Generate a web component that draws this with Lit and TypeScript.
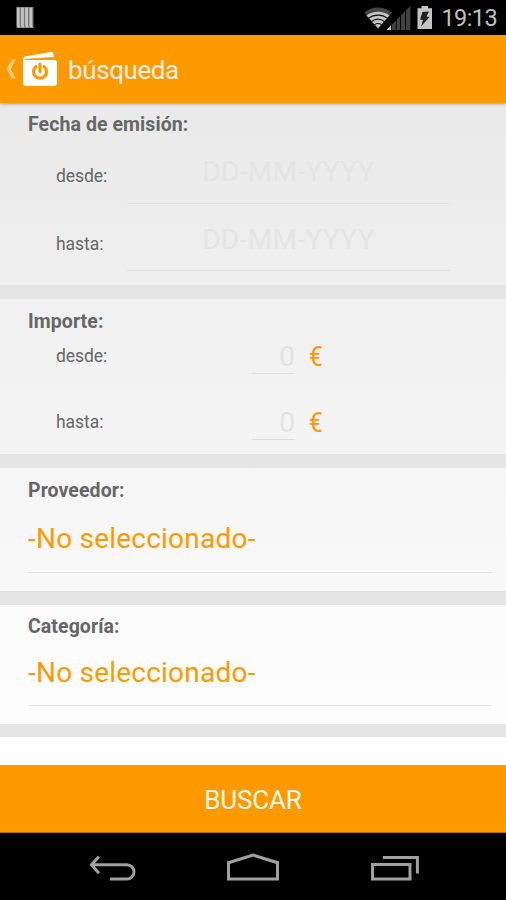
import { LitElement, html, css, svg } from "lit";
import { customElement } from "lit/decorators.js";

@customElement("app-root")
export class AppRoot extends LitElement {
  static styles = css`
    :host {
      display: flex;
      flex-direction: column;
      width: 506px;
      height: 900px;
      overflow: hidden;
      background: #000;
      font-family: Roboto, "Liberation Sans", sans-serif;
      color: #666;
    }
    * { box-sizing: border-box; }
    svg { display: block; flex: none; }
    .status {
      height: 35px;
      flex: none;
      display: flex;
      align-items: center;
      padding: 0 9px 0 16px;
      color: #c0c0c0;
    }
    .grow { flex: 1; }
    .clock { font-size: 23.5px; line-height: 35px; padding-top: 1px; margin-left: 8.5px; letter-spacing: -0.6px; }
    .bar {
      height: 68px;
      flex: none;
      display: flex;
      align-items: center;
      background: #ff9900;
      color: #f5efe6;
      position: relative;
      box-shadow: 0 1px 3px rgba(0, 0, 0, 0.35);
      z-index: 1;
    }
    .title { font-size: 26px; line-height: 68px; margin-left: 9px; padding-top: 1px; letter-spacing: -0.4px; }
    .form {
      height: 662px;
      flex: none;
      background: linear-gradient(#e9e9e9, #ffffff);
    }
    .section { padding-left: 28px; overflow: hidden; }
    .issue { height: 182px; padding-top: 10px; }
    .amount { height: 155px; padding-top: 11px; }
    .provider { height: 123px; padding-top: 11px; }
    .category { height: 119px; padding-top: 10px; }
    .band { height: 14px; background: #e5e5e5; }
    .category + .band { height: 13px; }
    h2 { margin: 0; font-size: 19.5px; line-height: 23px; font-weight: 700; color: #666; letter-spacing: 0.08px; }
    .row { display: flex; padding-left: 28px; height: 67px; }
    .label { width: 71px; font-size: 17.5px; line-height: 20px; padding-top: 30px; letter-spacing: -0.05px; }
    .row + .row:not(.money) .label { padding-top: 31px; }
    .row + .row:not(.money) .field { padding-top: 20px; }
    .field {
      width: 323px;
      height: 68px;
      border-bottom: 1px solid #e2e2e2;
      text-align: center;
      font-size: 28px;
      line-height: 34px;
      padding-top: 19px;
      letter-spacing: 0.35px;
      color: #e4e4e4;
    }
    .money { height: 66px; }
    .money .label { width: 196px; padding-top: 13px; }
    .number {
      width: 43px;
      height: 41px;
      border-bottom: 1px solid #e0e0e0;
      text-align: right;
      font-size: 28px;
      line-height: 34px;
      padding-top: 7px;
      color: #e2e2e2;
    }
    .euro {
      font-size: 28px;
      line-height: 34px;
      padding-top: 7px;
      margin-left: 13px;
      color: #ff9900;
      transform: scaleX(0.9);
    }
    .select {
      width: 464px;
      height: 71px;
      border-bottom: 1px solid #e2e2e2;
      color: #ff9900;
      font-size: 28px;
      line-height: 34px;
      padding-top: 20px;
      letter-spacing: 0.22px;
    }
    .category .select { height: 68px; padding-top: 18px; }
    .submit {
      height: 68px;
      flex: none;
      border: 0;
      border-bottom: 1px solid #b56d00;
      padding: 2px 0 0;
      background: #ff9900;
      color: #fff8ee;
      font: 26px Roboto, "Liberation Sans", sans-serif;
      letter-spacing: -0.15px;
    }
    .nav { height: 67px; flex: none; display: flex; align-items: flex-start; padding: 19px 87px 0 87px; justify-content: space-between; }
  `;

  private money(label: string) {
    return html`<div class="row money">
      <div class="label">${label}</div>
      <div class="number">0</div>
      <div class="euro">€</div>
    </div>`;
  }

  private date(label: string) {
    return html`<div class="row">
      <div class="label">${label}</div>
      <div class="field">DD-MM-YYYY</div>
    </div>`;
  }

  render() {
    return html`
      <div class="status">
        <svg width="18" height="21" viewBox="0 0 18 21">
          <rect x="0.5" width="17" height="21" fill="#777" />
          ${[0.8, 5, 9.2, 13.4].map((x) => svg`<path d="M${x} .5h2.8v18l.8 2h-2.8l-.8-2z" fill="#c4c4c4"/>`)}
        </svg>
        <div class="grow"></div>
        <svg width="69" height="24" viewBox="0 0 69 24">
          <path d="M.3 6.500C8-.3 20-.3 27.700 6.500L23.500 11.500C18 7 10 7 4.500 11.500Z" fill="#444" />
          <path d="M2.500 9.500C9 4.500 19 4.500 25.500 9.500L14 22.500Z" fill="#c4c4c4" />
          <path d="M4.500 12.300C10 8 18 8 23.500 12.300M7.500 15.500C11.500 12.500 16.500 12.500 20.500 15.500M10.500 18.700C13 17 15 17 17.500 18.700" fill="none" stroke="#111" stroke-width="1.200" />
          <path d="M22.300 24L27 19.300V24Z" fill="#c4c4c4" />
          <path d="M27.600 24V18.700L31.700 14.600V24ZM32.600 24V13.700L36 10.300V24ZM36.900 24V9.400L41 5.300V24ZM42 24V4.300L46.300 0V24Z" fill="#414141" />
          <path d="M57.500 0h6.500v2.300h4V23H53.500V2.300h4Z" fill="#c4c4c4" />
          <path d="M58.500 6L65 5.500L62.500 10.500L65.500 11L57 20.500L59 14L56 13.500Z" fill="#222" />
        </svg>
        <div class="clock">19:13</div>
      </div>
      <div class="bar">
        <svg width="59" height="68" viewBox="0 0 59 68">
          <path d="M12 24.500H15.700L10.800 34L15.700 43.500H12L6.300 34Z" fill="#ffcb80" />
          <path d="M23 24.500C23 22.500 24 21.500 26 21.200L51 17C52.800 16.800 53.700 18 53.700 19.500V22.300L25 24.300V25H54C56 25 57 26.300 57 28V47.500C57 50 56 51 53.500 51H26.500C24 51 23 50 23 47.500Z" fill="#fff" />
          <path d="M25 24.300L53.500 22.400" stroke="#ff9900" stroke-width="0.700" />
          <path d="M35.900 31.700A6.500 6.500 0 1 0 44.100 31.700M40 29V36.500" fill="none" stroke="#ff9900" stroke-width="3.200" stroke-linecap="round" />
        </svg>
        <div class="title">búsqueda</div>
      </div>
      <div class="form">
        <div class="section issue">
          <h2>Fecha de emisión:</h2>
          ${this.date("desde:")} ${this.date("hasta:")}
        </div>
        <div class="band"></div>
        <div class="section amount">
          <h2>Importe:</h2>
          ${this.money("desde:")} ${this.money("hasta:")}
        </div>
        <div class="band"></div>
        <div class="section provider">
          <h2>Proveedor:</h2>
          <div class="select">-No seleccionado-</div>
        </div>
        <div class="band"></div>
        <div class="section category">
          <h2>Categoría:</h2>
          <div class="select">-No seleccionado-</div>
        </div>
        <div class="band"></div>
      </div>
      <button class="submit">BUSCAR</button>
      <div class="nav">
        <svg width="49" height="30" viewBox="0 0 49 30" fill="none" stroke="#a0a0a0" stroke-width="3">
          <path d="M12 4.500L4.500 12.700L12 21.200M4.500 12.700H39.800A7.200 7.200 0 0 1 39.800 27.100H23" />
        </svg>
        <svg width="54" height="30" viewBox="0 0 54 30" fill="none" stroke="#a0a0a0" stroke-width="3">
          <path d="M2.500 10.700L27 3L51.500 10.700V27H2.500Z" />
        </svg>
        <svg width="49" height="30" viewBox="0 0 49 30" fill="none" stroke="#a0a0a0" stroke-width="3">
          <path d="M2.500 12.500H40V27H2.500ZM13 5.500H47.400V21.500" />
        </svg>
      </div>
    `;
  }
}
